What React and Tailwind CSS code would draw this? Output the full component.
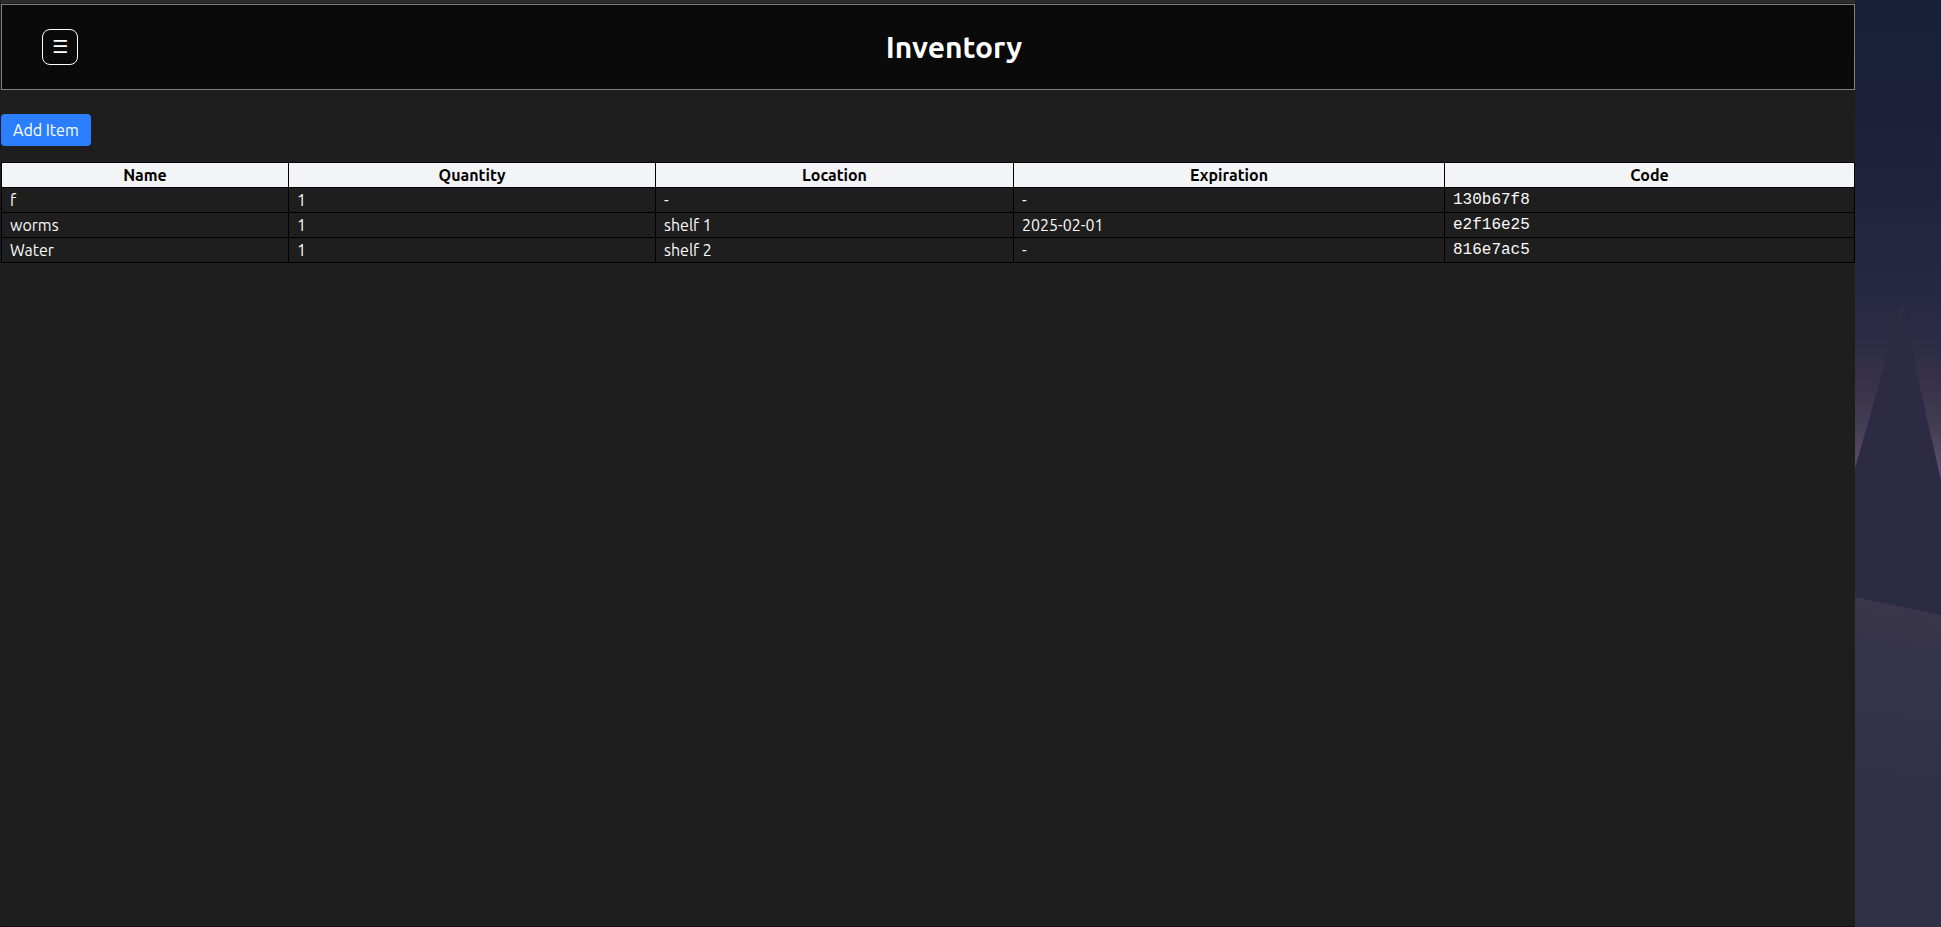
const columns = [
  { label: "Name", width: "w-[287px]" },
  { label: "Quantity", width: "w-[367px]" },
  { label: "Location", width: "w-[358px]" },
  { label: "Expiration", width: "w-[431px]" },
  { label: "Code", width: "w-[410px]" },
];

const items = [
  { name: "f", quantity: 1, location: "-", expiration: "-", code: "130b67f8" },
  { name: "worms", quantity: 1, location: "shelf 1", expiration: "2025-02-01", code: "e2f16e25" },
  { name: "Water", quantity: 1, location: "shelf 2", expiration: "-", code: "816e7ac5" },
];

function Header() {
  return (
    <header className="flex items-center gap-4 border border-[#808080] bg-[#0a0a0a] px-10 py-6">
      <button
        type="button"
        aria-label="Open menu"
        className="flex size-9 items-center justify-center rounded-lg border border-white font-['DejaVu_Sans',sans-serif] text-lg leading-6 text-white"
      >
        ☰
      </button>
      <h1 className="flex-1 text-center text-3xl leading-9 font-bold text-white">Inventory</h1>
    </header>
  );
}

function InventoryTable() {
  return (
    <table className="mt-4 w-full table-fixed border-collapse border border-black text-base leading-6">
      <thead>
        <tr className="bg-[#f3f4f6] text-black">
          {columns.map((column) => (
            <th key={column.label} scope="col" className={`${column.width} border border-black px-2 text-center font-bold`}>
              {column.label}
            </th>
          ))}
        </tr>
      </thead>
      <tbody>
        {items.map((item) => (
          <tr key={item.code}>
            <td className="border border-black px-2">{item.name}</td>
            <td className="border border-black px-2">{item.quantity}</td>
            <td className="border border-black px-2">{item.location}</td>
            <td className="border border-black px-2">{item.expiration}</td>
            <td className="border border-black px-2 font-['Liberation_Mono',monospace]">{item.code}</td>
          </tr>
        ))}
      </tbody>
    </table>
  );
}

function Wallpaper() {
  return (
    <svg viewBox="0 0 86 927" preserveAspectRatio="none" className="h-full w-full" aria-hidden="true">
      <defs>
        <linearGradient id="sky" gradientUnits="userSpaceOnUse" x1="0" y1="0" x2="0" y2="480">
          <stop offset="0" stopColor="#191f38" />
          <stop offset="0.3" stopColor="#1d213b" />
          <stop offset="0.46" stopColor="#22253f" />
          <stop offset="0.58" stopColor="#262741" />
          <stop offset="0.69" stopColor="#2b2b45" />
          <stop offset="0.78" stopColor="#353047" />
          <stop offset="0.88" stopColor="#423c52" />
          <stop offset="1" stopColor="#64506f" />
        </linearGradient>
        <linearGradient id="peak" gradientUnits="userSpaceOnUse" x1="0" y1="300" x2="0" y2="610">
          <stop offset="0" stopColor="#2c2c43" />
          <stop offset="0.2" stopColor="#2c2b43" />
          <stop offset="1" stopColor="#2b2b41" />
        </linearGradient>
        <linearGradient id="ground" gradientUnits="userSpaceOnUse" x1="25" y1="600" x2="0" y2="770">
          <stop offset="0" stopColor="#3a364c" />
          <stop offset="0.5" stopColor="#343349" />
          <stop offset="1" stopColor="#303147" />
        </linearGradient>
      </defs>
      <rect width="86" height="927" fill="url(#sky)" />
      <path d="M0 468 L13 423 L27 373 L36 338 L47 302 L56 340 L62 373 L73 423 L86 480 V620 H0 Z" fill="url(#peak)" />
      <path d="M0 597 L86 615 V927 H0 Z" fill="url(#ground)" />
    </svg>
  );
}

export default function App() {
  return (
    <div className="flex min-h-screen bg-[#1e1e1e] font-['Ubuntu','Noto_Sans',sans-serif] text-[#fafafa]">
      <main className="min-w-0 flex-1 border-b border-l border-b-[#101010] border-l-[#191a26]">
        <div className="h-1 border-b border-[#1a1a1a] bg-[#2d2d2d]" />
        <Header />
        <button type="button" className="mt-6 block rounded bg-[#2b7fff] px-3 py-1 text-base leading-6 text-white">
          Add Item
        </button>
        <InventoryTable />
      </main>
      <aside className="flex w-[86px] shrink-0">
        <Wallpaper />
      </aside>
    </div>
  );
}
